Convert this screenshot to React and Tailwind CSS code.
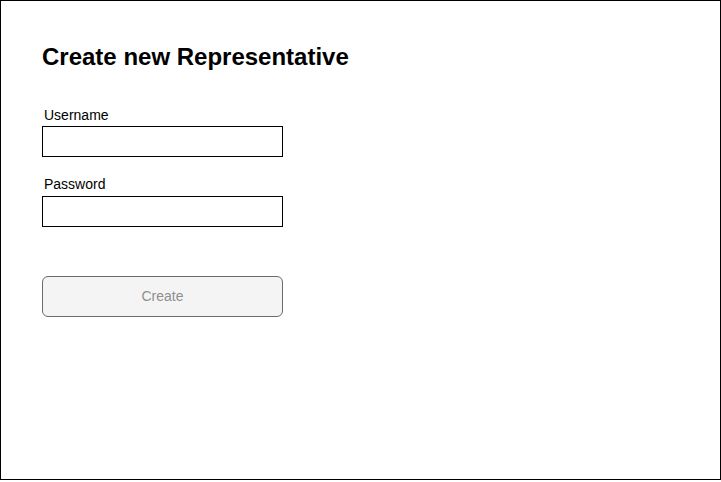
export default function App() {
  return (
    <div className="w-[721px] h-[482px] bg-white" style={{ fontFamily: '"Liberation Sans", Arial, sans-serif' }}>
      <div className="h-[480px] w-[721px] border border-black pl-[41px] pt-[42px]">
        <h1 className="text-[24px] leading-[28px] font-bold text-black">Create new Representative</h1>
        <form className="mt-[36px] w-[241px]" onSubmit={(e) => e.preventDefault()}>
          <label className="block pl-[2px] text-[14px] leading-[16px] text-black">Username</label>
          <input type="text" className="mt-[3px] block h-[31px] w-[241px] border border-black bg-white px-2 text-[14px] outline-none" />
          <label className="mt-[19px] block pl-[2px] text-[14px] leading-[16px] text-black">Password</label>
          <input type="password" className="mt-[4px] block h-[31px] w-[241px] border border-black bg-white px-2 text-[14px] outline-none" />
          <button type="submit" disabled className="mt-[49px] block h-[41px] w-[241px] rounded-[6px] border border-[#6b6b6b] bg-[#f4f4f4] text-[14px] text-[#8f8f8f]">
            Create
          </button>
        </form>
      </div>
    </div>
  );
}
